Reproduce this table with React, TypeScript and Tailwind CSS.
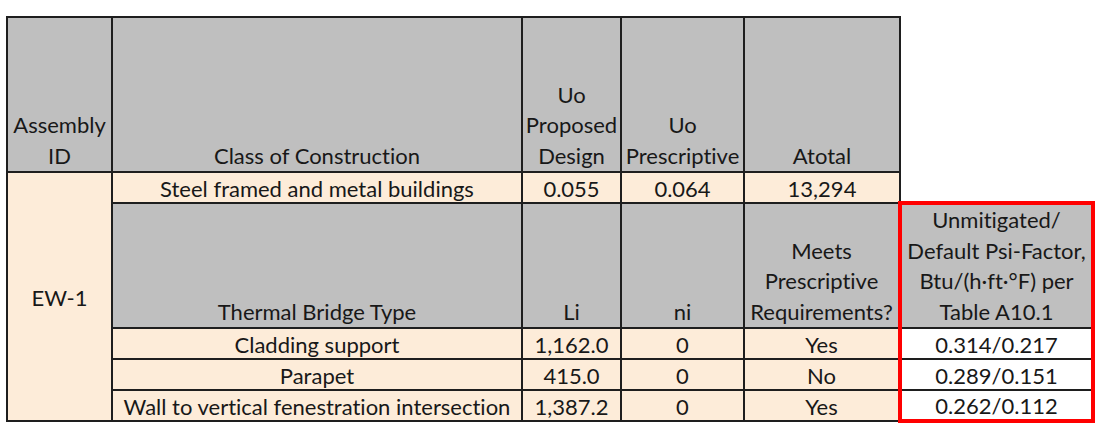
export default function App() {
  const cell = "border-2 border-[#1e1e1e] text-center align-middle p-0 pt-[2px] whitespace-nowrap leading-[24px]";
  const hdr = "border-2 border-[#1e1e1e] text-center align-bottom p-0 whitespace-nowrap bg-[#bfbfbf] leading-[30.5px]";
  const beige = "bg-[#fdecd9]";
  const rows = [
    { t: "Cladding support", li: "1,162.0", ni: "0", m: "Yes", psi: "0.314/0.217" },
    { t: "Parapet", li: "415.0", ni: "0", m: "No", psi: "0.289/0.151" },
    { t: "Wall to vertical fenestration intersection", li: "1,387.2", ni: "0", m: "Yes", psi: "0.262/0.112" },
  ];
  return (
    <div className="w-[1104px] h-[430px] bg-white pl-[6px] pt-[16px] text-[#181818] text-[22px] [font-variant-ligatures:none]" style={{ fontFamily: "Lato, 'Open Sans', sans-serif" }}>
      <table className="table-fixed border-collapse w-[1086px]">
        <colgroup>
          <col className="w-[105px]" />
          <col className="w-[410px]" />
          <col className="w-[99px]" />
          <col className="w-[123px]" />
          <col className="w-[156px]" />
          <col className="w-[193px]" />
        </colgroup>
        <tbody>
          <tr className="h-[155px]">
            <td className={hdr}>Assembly<br />ID</td>
            <td className={hdr}>Class of Construction</td>
            <td className={hdr}>Uo<br />Proposed<br />Design</td>
            <td className={hdr}>Uo<br />Prescriptive</td>
            <td className={hdr}>Atotal</td>
            <td className="p-0"></td>
          </tr>
          <tr className="h-[31px]">
            <td rowSpan={5} className={`${cell} ${beige}`}>EW-1</td>
            <td className={`${cell} ${beige}`}>Steel framed and metal buildings</td>
            <td className={`${cell} ${beige}`}>0.055</td>
            <td className={`${cell} ${beige}`}>0.064</td>
            <td className={`${cell} ${beige}`}>13,294</td>
            <td className="p-0"></td>
          </tr>
          <tr className="h-[125px]">
            <td className={hdr}>Thermal Bridge Type</td>
            <td className={hdr}>Li</td>
            <td className={hdr}>ni</td>
            <td className={hdr}>Meets<br />Prescriptive<br />Requirements?</td>
            <td className={`${hdr} border-x-4 border-t-4 border-x-[#ff0000] border-t-[#ff0000]`}>
              Unmitigated/<br />Default Psi-Factor,<br />Btu/(h·ft·°F) per<br />Table A10.1
            </td>
          </tr>
          {rows.map((r, i) => (
            <tr key={i} className="h-[31px]">
              <td className={`${cell} ${beige}`}>{r.t}</td>
              <td className={`${cell} ${beige}`}>{r.li}</td>
              <td className={`${cell} ${beige}`}>{r.ni}</td>
              <td className={`${cell} ${beige}`}>{r.m}</td>
              <td
                className={
                  i === 2
                    ? `${cell} bg-white border-x-4 border-b-4 border-x-[#ff0000] border-b-[#ff0000]`
                    : `${cell} bg-white border-x-4 border-x-[#ff0000]`
                }
              >
                {r.psi}
              </td>
            </tr>
          ))}
        </tbody>
      </table>
    </div>
  );
}
